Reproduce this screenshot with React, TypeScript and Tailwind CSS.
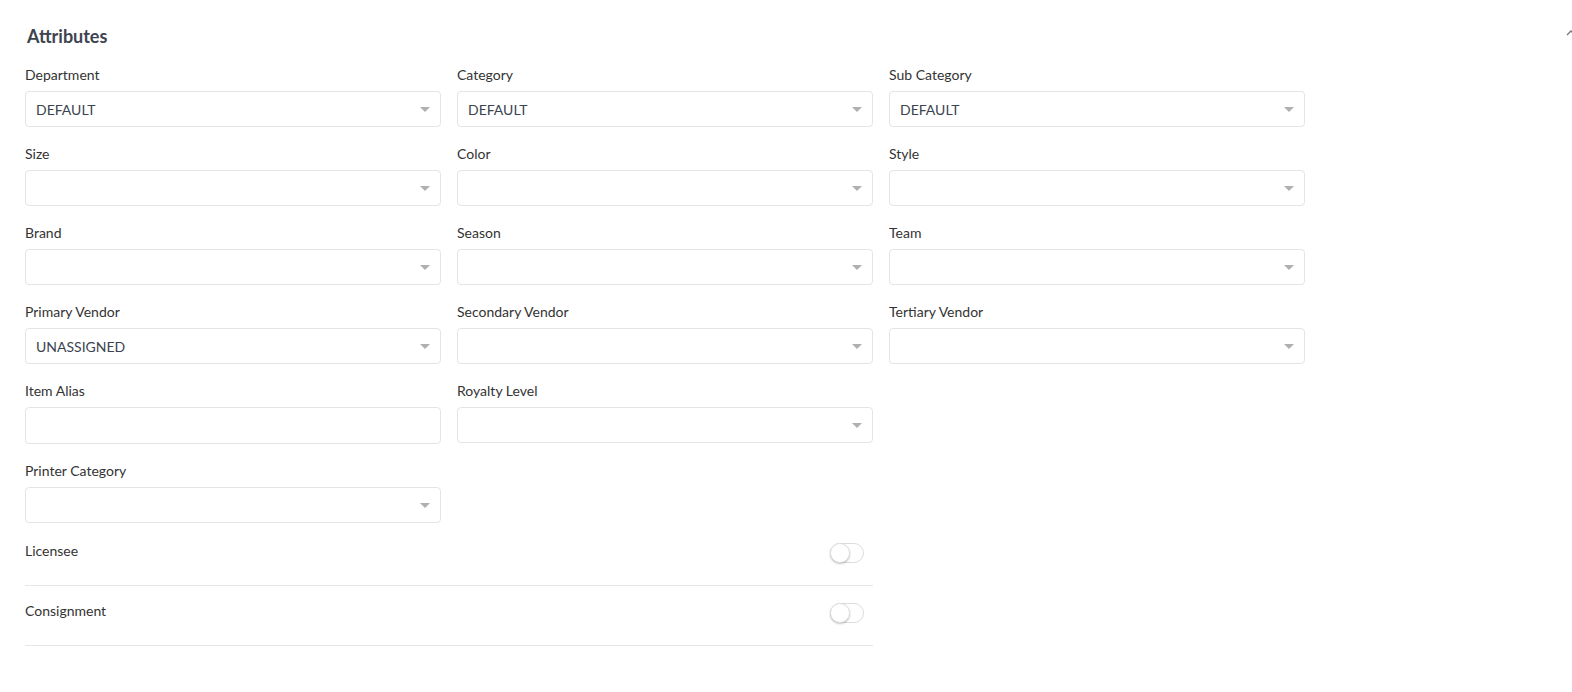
const rows: { label: string; value?: string; kind?: "select" | "text" }[][] = [
  [
    { label: "Department", value: "DEFAULT" },
    { label: "Category", value: "DEFAULT" },
    { label: "Sub Category", value: "DEFAULT" },
  ],
  [{ label: "Size" }, { label: "Color" }, { label: "Style" }],
  [{ label: "Brand" }, { label: "Season" }, { label: "Team" }],
  [
    { label: "Primary Vendor", value: "UNASSIGNED" },
    { label: "Secondary Vendor" },
    { label: "Tertiary Vendor" },
  ],
  [{ label: "Item Alias", kind: "text" }, { label: "Royalty Level" }],
  [{ label: "Printer Category" }],
];

function Field({ label, value, kind = "select" }: { label: string; value?: string; kind?: "select" | "text" }) {
  return (
    <div className="flex flex-col">
      <label className="pt-[1px] text-[14px] leading-[18px] text-[#333]">{label}</label>
      <div
        className={`mt-[7px] flex items-center justify-between rounded-[4px] border border-[#e4e4e4] bg-white pl-[10px] pr-[10px] ${
          kind === "text" ? "h-[37px]" : "h-[36px]"
        }`}
      >
        <span className="text-[14px] text-[#3b4350]">{value}</span>
        {kind === "select" && (
          <svg width="10" height="5" viewBox="0 0 10 5" className="mt-[1px]">
            <path d="M0 0h10L5 5z" fill="#b0b0b0" />
          </svg>
        )}
      </div>
    </div>
  );
}

function Toggle() {
  return (
    <div className="relative h-[20px] w-[34px] rounded-full border border-[#dcdcdc] bg-white">
      <div className="absolute left-[-1px] top-[-1px] h-[20px] w-[20px] rounded-full border border-[#e0e0e0] bg-white shadow-[0_1px_2px_rgba(0,0,0,0.25)]" />
    </div>
  );
}

export default function App() {
  return (
    <div className="relative min-h-[692px] bg-white font-['Lato','Noto_Sans',sans-serif]">
      <svg width="10" height="8" viewBox="0 0 10 8" className="absolute right-[-4px] top-[29px]">
        <path d="M1 6l4-4 4 4" stroke="#777" strokeWidth="1.3" fill="none" />
      </svg>
      <div className="pl-[25px] pt-[25px]">
        <h2 className="pl-[2px] text-[18px] font-bold leading-[22px] text-[#3d4450]">Attributes</h2>
        <div className="mt-[18px] flex flex-col gap-[17px]">
          {rows.map((row, i) => (
            <div key={i} className="grid w-[1280px] grid-cols-3 gap-x-[16px]">
              {row.map((f) => (
                <Field key={f.label} {...f} />
              ))}
            </div>
          ))}
        </div>
        <div className="mt-[3px] w-[848px]">
          {["Licensee", "Consignment"].map((name) => (
            <div
              key={name}
              className="flex h-[60px] items-start justify-between border-b border-[#e6e6e6] pr-[9px] pt-[16px]"
            >
              <span className="text-[14px] leading-[18px] text-[#333]">{name}</span>
              <div className="mt-[1px]">
                <Toggle />
              </div>
            </div>
          ))}
        </div>
      </div>
    </div>
  );
}
